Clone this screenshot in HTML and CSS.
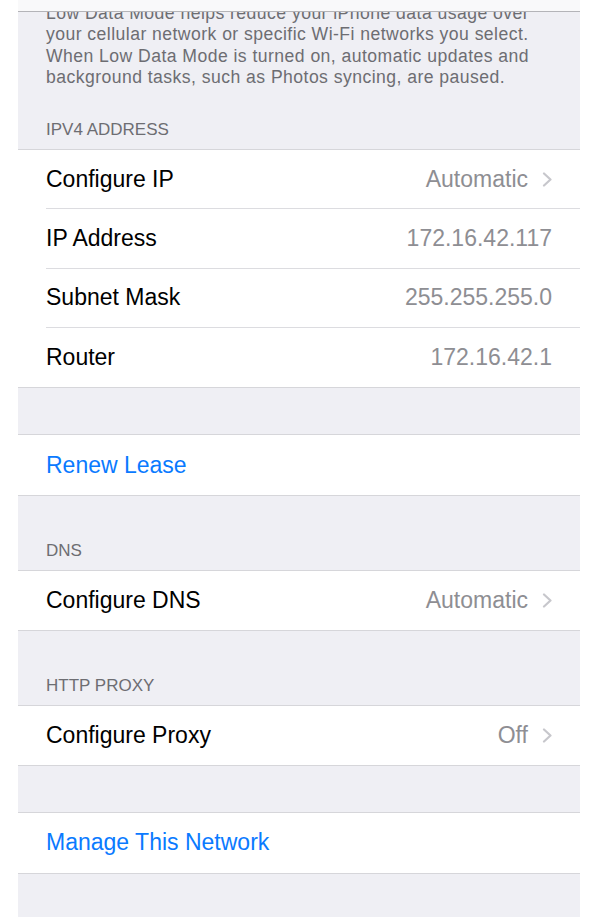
FILE: index.html
```html
<!DOCTYPE html>
<html lang="en">
<head>
    <meta charset="UTF-8">
    <meta name="viewport" content="width=device-width, initial-scale=1.0">
    <title>Wi-Fi Network</title>
    <link rel="stylesheet" href="styles.css">
</head>
<body>
    <div class="screen">
        <div class="nav-bar"></div>
        <div class="scroll">
            <div class="scroll-inner">
                <p class="group-footer">Low Data Mode helps reduce your iPhone data usage over<br>
                    your cellular network or specific Wi-Fi networks you select.<br>
                    When Low Data Mode is turned on, automatic updates and<br>
                    background tasks, such as Photos syncing, are paused.</p>

                <div class="section-header first">IPV4 Address</div>
                <div class="group">
                    <div class="cell">
                        <div class="cell-inner">
                            <span class="label">Configure IP</span>
                            <span class="value">Automatic</span>
                            <svg class="chevron" width="10" height="15" viewBox="0 0 10 15"><path d="M2 1.5 L8.5 7.5 L2 13.5" /></svg>
                        </div>
                    </div>
                    <div class="cell">
                        <div class="cell-inner">
                            <span class="label">IP Address</span>
                            <span class="value">172.16.42.117</span>
                        </div>
                    </div>
                    <div class="cell">
                        <div class="cell-inner">
                            <span class="label">Subnet Mask</span>
                            <span class="value">255.255.255.0</span>
                        </div>
                    </div>
                    <div class="cell">
                        <div class="cell-inner">
                            <span class="label">Router</span>
                            <span class="value">172.16.42.1</span>
                        </div>
                    </div>
                </div>

                <div class="spacer"></div>
                <div class="group">
                    <div class="cell">
                        <div class="cell-inner">
                            <span class="label action">Renew Lease</span>
                        </div>
                    </div>
                </div>

                <div class="section-header">DNS</div>
                <div class="group">
                    <div class="cell">
                        <div class="cell-inner">
                            <span class="label">Configure DNS</span>
                            <span class="value">Automatic</span>
                            <svg class="chevron" width="10" height="15" viewBox="0 0 10 15"><path d="M2 1.5 L8.5 7.5 L2 13.5" /></svg>
                        </div>
                    </div>
                </div>

                <div class="section-header">HTTP Proxy</div>
                <div class="group">
                    <div class="cell">
                        <div class="cell-inner">
                            <span class="label">Configure Proxy</span>
                            <span class="value">Off</span>
                            <svg class="chevron" width="10" height="15" viewBox="0 0 10 15"><path d="M2 1.5 L8.5 7.5 L2 13.5" /></svg>
                        </div>
                    </div>
                </div>

                <div class="spacer"></div>
                <div class="group">
                    <div class="cell">
                        <div class="cell-inner">
                            <span class="label action">Manage This Network</span>
                        </div>
                    </div>
                </div>
            </div>
        </div>
    </div>
</body>
</html>
```

FILE: styles.css
```css
body {
    margin: 0;
    background-color: white;
    font-family: "Liberation Sans", Arial, sans-serif;
}
.screen {
    margin: 0 11px 0 18px;
    height: 917px;
    background-color: #efeff4;
    display: flex;
    flex-direction: column;
}
.nav-bar {
    height: 11px;
    background-color: #f9f9fa;
    border-bottom: 1px solid #b4b4b8;
    flex-shrink: 0;
}
.scroll {
    flex: 1;
    overflow: hidden;
}
.scroll-inner {
    margin-top: -9px;
}
.group-footer {
    margin: 0;
    padding: 0 20px 0 28px;
    font-size: 17.6px;
    letter-spacing: 0.45px;
    line-height: 21.3px;
    color: #6d6d72;
    white-space: nowrap;
}
.section-header {
    padding: 44px 28px 9px;
    font-size: 17px;
    line-height: 21px;
    color: #6d6d72;
    text-transform: uppercase;
}
.section-header.first {
    padding-top: 31px;
}
.spacer {
    height: 46px;
}
.group {
    background-color: white;
    border-top: 1px solid #d6d6da;
    border-bottom: 1px solid #d6d6da;
}
.cell {
    padding-left: 28px;
}
.cell-inner {
    height: 59.3px;
    box-sizing: border-box;
    display: flex;
    align-items: center;
    padding-right: 28px;
    border-bottom: 1px solid #dcdce0;
    font-size: 23px;
}
.cell:last-child .cell-inner {
    border-bottom: none;
}
.label {
    flex: 1;
    color: black;
}
.label.action {
    color: #0a7aff;
}
.value {
    color: #8e8e93;
}
.chevron {
    margin-left: 14px;
    fill: none;
    stroke: #c7c7cc;
    stroke-width: 2.2;
    stroke-linecap: round;
    stroke-linejoin: round;
}
```
